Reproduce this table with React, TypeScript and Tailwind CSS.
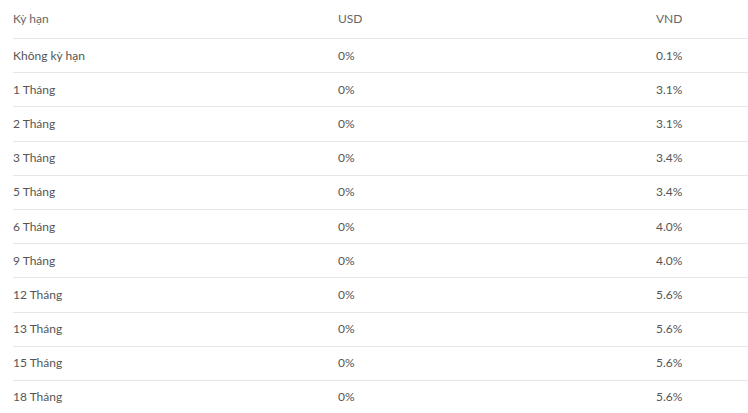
const rows: [string, string, string][] = [
  ["Không kỳ hạn", "0%", "0.1%"],
  ["1 Tháng", "0%", "3.1%"],
  ["2 Tháng", "0%", "3.1%"],
  ["3 Tháng", "0%", "3.4%"],
  ["5 Tháng", "0%", "3.4%"],
  ["6 Tháng", "0%", "4.0%"],
  ["9 Tháng", "0%", "4.0%"],
  ["12 Tháng", "0%", "5.6%"],
  ["13 Tháng", "0%", "5.6%"],
  ["15 Tháng", "0%", "5.6%"],
  ["18 Tháng", "0%", "5.6%"],
];

export default function App() {
  return (
    <div className="w-[748px] h-[413px] overflow-hidden bg-white pl-[13px] font-['Lato',sans-serif] text-[12px] text-[#555]">
      {/* Header */}
      <div className="grid grid-cols-[325px_318px_1fr] h-[38px] items-center text-[#666]">
        <span>Kỳ hạn</span>
        <span>USD</span>
        <span>VND</span>
      </div>

      {/* Rows */}
      {rows.map(([term, usd, vnd]) => (
        <div
          key={term}
          className="grid grid-cols-[325px_318px_1fr] h-[34.2px] items-center border-t border-[#e6e6e6]"
        >
          <span>{term}</span>
          <span>{usd}</span>
          <span>{vnd}</span>
        </div>
      ))}
    </div>
  );
}
